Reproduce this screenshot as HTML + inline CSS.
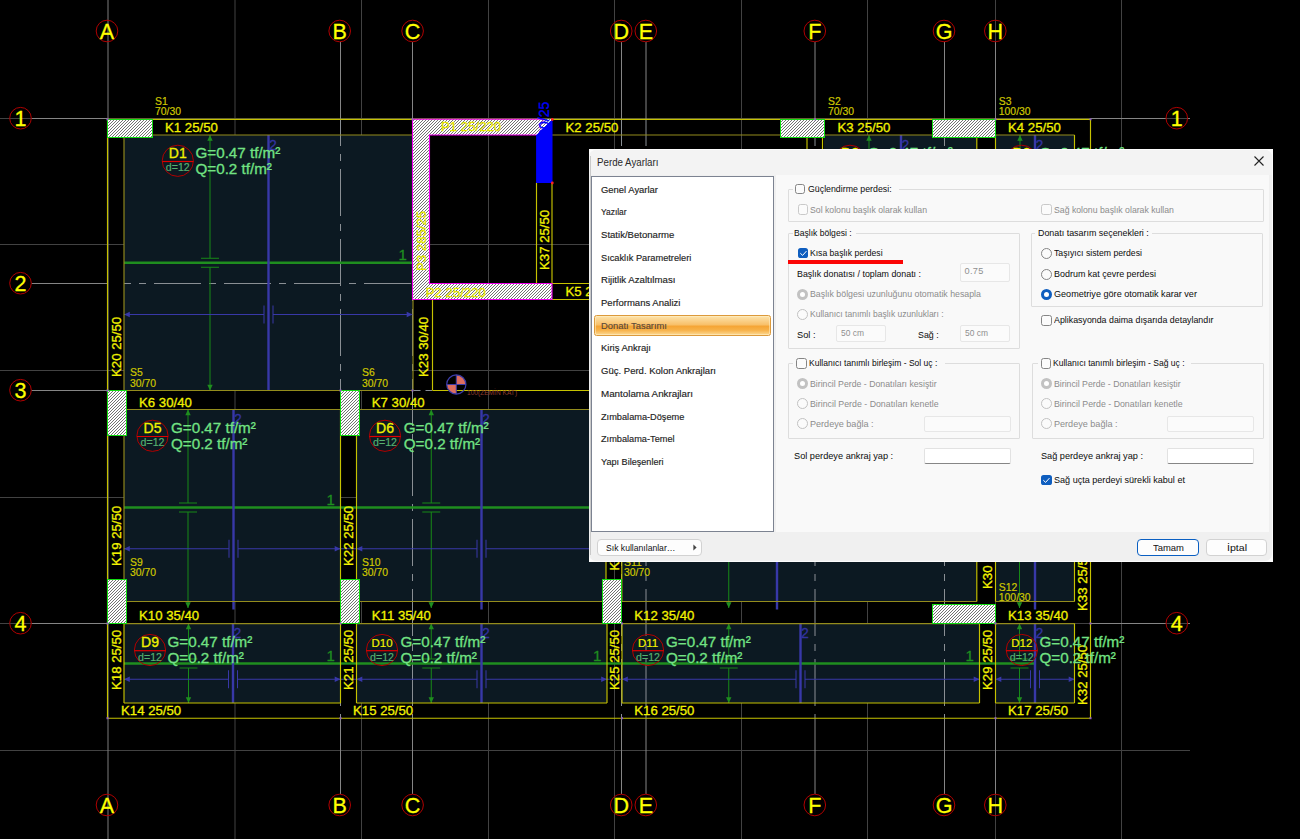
<!DOCTYPE html>
<html lang="tr">
<head>
<meta charset="utf-8">
<title>Perde Ayarları</title>
<style>
html,body{margin:0;padding:0;background:#000;}
body{width:1300px;height:839px;overflow:hidden;position:relative;font-family:"Liberation Sans",sans-serif;}
svg.cad{position:absolute;left:0;top:0;}
svg.cad text{font-family:"Liberation Sans",sans-serif;}
.dlgwrap{position:absolute;left:0;top:0;width:1300px;height:839px;}
.b{position:absolute;display:block;}
.t{position:absolute;display:block;white-space:nowrap;line-height:1;transform-origin:0 50%;font-family:"Liberation Sans",sans-serif;}
</style>
</head>
<body>
<svg class="cad" width="1300" height="839" viewBox="0 0 1300 839">
<defs>
<pattern id="hatch" width="3" height="3" patternUnits="userSpaceOnUse">
<rect width="3" height="3" fill="#ffffff"/>
<path d="M-1 1L1 -1M0 3L3 0M2 4L4 2" stroke="#1a1a1a" stroke-width="0.62"/>
</pattern>
</defs>
<rect width="1300" height="839" fill="#000"/>
<line x1="235" y1="0" x2="235" y2="839" stroke="#424242" stroke-width="1" />
<line x1="361.5" y1="0" x2="361.5" y2="839" stroke="#424242" stroke-width="1" />
<line x1="488.5" y1="0" x2="488.5" y2="839" stroke="#424242" stroke-width="1" />
<line x1="614.5" y1="0" x2="614.5" y2="839" stroke="#424242" stroke-width="1" />
<line x1="741.5" y1="0" x2="741.5" y2="839" stroke="#424242" stroke-width="1" />
<line x1="867.5" y1="0" x2="867.5" y2="839" stroke="#424242" stroke-width="1" />
<line x1="995.5" y1="0" x2="995.5" y2="839" stroke="#424242" stroke-width="1" />
<line x1="1121.5" y1="0" x2="1121.5" y2="839" stroke="#424242" stroke-width="1" />
<line x1="0" y1="118.5" x2="1190" y2="118.5" stroke="#424242" stroke-width="1" />
<line x1="0" y1="244.5" x2="1190" y2="244.5" stroke="#424242" stroke-width="1" />
<line x1="0" y1="370.5" x2="1190" y2="370.5" stroke="#424242" stroke-width="1" />
<line x1="0" y1="497.5" x2="1190" y2="497.5" stroke="#424242" stroke-width="1" />
<line x1="0" y1="623.5" x2="1190" y2="623.5" stroke="#424242" stroke-width="1" />
<line x1="0" y1="750.5" x2="1190" y2="750.5" stroke="#424242" stroke-width="1" />
<line x1="108" y1="0" x2="108" y2="839" stroke="#7c7c7c" stroke-width="1" />
<line x1="340.5" y1="42" x2="340.5" y2="119" stroke="#858585" stroke-width="1" />
<line x1="340.5" y1="718" x2="340.5" y2="794" stroke="#858585" stroke-width="1" />
<line x1="412.5" y1="42" x2="412.5" y2="119" stroke="#858585" stroke-width="1" />
<line x1="412.5" y1="718" x2="412.5" y2="794" stroke="#858585" stroke-width="1" />
<line x1="621.5" y1="42" x2="621.5" y2="119" stroke="#858585" stroke-width="1" />
<line x1="621.5" y1="718" x2="621.5" y2="794" stroke="#858585" stroke-width="1" />
<line x1="646" y1="42" x2="646" y2="119" stroke="#858585" stroke-width="1" />
<line x1="646" y1="718" x2="646" y2="794" stroke="#858585" stroke-width="1" />
<line x1="815" y1="42" x2="815" y2="119" stroke="#858585" stroke-width="1" />
<line x1="815" y1="718" x2="815" y2="794" stroke="#858585" stroke-width="1" />
<line x1="944.5" y1="42" x2="944.5" y2="119" stroke="#858585" stroke-width="1" />
<line x1="944.5" y1="718" x2="944.5" y2="794" stroke="#858585" stroke-width="1" />
<line x1="995.5" y1="42" x2="995.5" y2="119" stroke="#858585" stroke-width="1" />
<line x1="995.5" y1="718" x2="995.5" y2="794" stroke="#858585" stroke-width="1" />
<line x1="31.5" y1="118.5" x2="107.5" y2="118.5" stroke="#858585" stroke-width="1" />
<line x1="1090.5" y1="118.5" x2="1166" y2="118.5" stroke="#858585" stroke-width="1" />
<line x1="1187.5" y1="118.5" x2="1190" y2="118.5" stroke="#858585" stroke-width="1" />
<line x1="31.5" y1="283.5" x2="107.5" y2="283.5" stroke="#858585" stroke-width="1" />
<line x1="1090.5" y1="283.5" x2="1166" y2="283.5" stroke="#858585" stroke-width="1" />
<line x1="1187.5" y1="283.5" x2="1190" y2="283.5" stroke="#858585" stroke-width="1" />
<line x1="31.5" y1="390.5" x2="107.5" y2="390.5" stroke="#858585" stroke-width="1" />
<line x1="1090.5" y1="390.5" x2="1166" y2="390.5" stroke="#858585" stroke-width="1" />
<line x1="1187.5" y1="390.5" x2="1190" y2="390.5" stroke="#858585" stroke-width="1" />
<line x1="31.5" y1="623.5" x2="107.5" y2="623.5" stroke="#858585" stroke-width="1" />
<line x1="1090.5" y1="623.5" x2="1166" y2="623.5" stroke="#858585" stroke-width="1" />
<line x1="1187.5" y1="623.5" x2="1190" y2="623.5" stroke="#858585" stroke-width="1" />
<rect x="124" y="135" width="288.5" height="255.5" fill="#0c1922" stroke="none" stroke-width="1" />
<rect x="824" y="135" width="152.8" height="255.5" fill="#0c1922" stroke="none" stroke-width="1" />
<rect x="996" y="135" width="78.5" height="255.5" fill="#0c1922" stroke="none" stroke-width="1" />
<rect x="124" y="409.5" width="216.5" height="192.0" fill="#0c1922" stroke="none" stroke-width="1" />
<rect x="356.5" y="409.5" width="249.5" height="192.0" fill="#0c1922" stroke="none" stroke-width="1" />
<rect x="622" y="409.5" width="354.8" height="192.0" fill="#0c1922" stroke="none" stroke-width="1" />
<rect x="995.5" y="409.5" width="79.0" height="192.0" fill="#0c1922" stroke="none" stroke-width="1" />
<rect x="124" y="623.5" width="216.5" height="79.5" fill="#0c1922" stroke="none" stroke-width="1" />
<rect x="356.5" y="623.5" width="250.5" height="79.5" fill="#0c1922" stroke="none" stroke-width="1" />
<rect x="622" y="623.5" width="357.5" height="79.5" fill="#0c1922" stroke="none" stroke-width="1" />
<rect x="995.5" y="623.5" width="79.0" height="79.5" fill="#0c1922" stroke="none" stroke-width="1" />
<line x1="340.5" y1="119" x2="340.5" y2="718" stroke="#8a8f94" stroke-width="1" stroke-dasharray="47 8 7 8" stroke-dashoffset="20"/>
<line x1="412.5" y1="119" x2="412.5" y2="718" stroke="#8a8f94" stroke-width="1" stroke-dasharray="47 8 7 8" stroke-dashoffset="20"/>
<line x1="621.5" y1="119" x2="621.5" y2="718" stroke="#8a8f94" stroke-width="1" stroke-dasharray="47 8 7 8" stroke-dashoffset="20"/>
<line x1="646" y1="119" x2="646" y2="718" stroke="#8a8f94" stroke-width="1" stroke-dasharray="47 8 7 8" stroke-dashoffset="20"/>
<line x1="815" y1="119" x2="815" y2="718" stroke="#8a8f94" stroke-width="1" stroke-dasharray="47 8 7 8" stroke-dashoffset="20"/>
<line x1="944.5" y1="119" x2="944.5" y2="718" stroke="#8a8f94" stroke-width="1" stroke-dasharray="47 8 7 8" stroke-dashoffset="20"/>
<line x1="124" y1="283.5" x2="1090" y2="283.5" stroke="#8a8f94" stroke-width="1" stroke-dasharray="47 8 7 8" stroke-dashoffset="40"/>
<line x1="124" y1="262.75" x2="412.5" y2="262.75" stroke="#1f8e1f" stroke-width="2.4" />
<line x1="210" y1="135" x2="210" y2="258.25" stroke="#178a17" stroke-width="1" />
<line x1="210" y1="267.25" x2="210" y2="390.5" stroke="#178a17" stroke-width="1" />
<path d="M207.3 384.7L212.7 384.7L210 390.5Z" fill="#1f8e1f"/>
<path d="M207.3 140.8L212.7 140.8L210 135Z" fill="#1f8e1f"/>
<line x1="201" y1="258.25" x2="219" y2="258.25" stroke="#178a17" stroke-width="1" />
<line x1="201" y1="267.25" x2="219" y2="267.25" stroke="#178a17" stroke-width="1" />
<line x1="268.5" y1="135" x2="268.5" y2="390.5" stroke="#3838a8" stroke-width="2.4" />
<line x1="124" y1="314.5" x2="264.0" y2="314.5" stroke="#3838a8" stroke-width="1" />
<line x1="273.0" y1="314.5" x2="412.5" y2="314.5" stroke="#3838a8" stroke-width="1" />
<path d="M129.8 311.8L129.8 317.2L124 314.5Z" fill="#3838a8"/>
<path d="M406.7 311.8L406.7 317.2L412.5 314.5Z" fill="#3838a8"/>
<line x1="264.0" y1="305.5" x2="264.0" y2="323.5" stroke="#3838a8" stroke-width="1" />
<line x1="273.0" y1="305.5" x2="273.0" y2="323.5" stroke="#3838a8" stroke-width="1" />
<text x="398.5" y="260.15" font-size="15" fill="#1f8e1f" stroke="#1f8e1f" stroke-width="0.3" >1</text>
<text x="268.9" y="149.8" font-size="14" fill="#3232a0" stroke="#3232a0" stroke-width="0.3" >2</text>
<line x1="824" y1="262.75" x2="976.8" y2="262.75" stroke="#1f8e1f" stroke-width="2.4" />
<line x1="869" y1="135" x2="869" y2="258.25" stroke="#178a17" stroke-width="1" />
<line x1="869" y1="267.25" x2="869" y2="390.5" stroke="#178a17" stroke-width="1" />
<path d="M866.3 384.7L871.7 384.7L869 390.5Z" fill="#1f8e1f"/>
<path d="M866.3 140.8L871.7 140.8L869 135Z" fill="#1f8e1f"/>
<line x1="860" y1="258.25" x2="878" y2="258.25" stroke="#178a17" stroke-width="1" />
<line x1="860" y1="267.25" x2="878" y2="267.25" stroke="#178a17" stroke-width="1" />
<line x1="901" y1="135" x2="901" y2="390.5" stroke="#3838a8" stroke-width="2.4" />
<line x1="824" y1="314.5" x2="896.5" y2="314.5" stroke="#3838a8" stroke-width="1" />
<line x1="905.5" y1="314.5" x2="976.8" y2="314.5" stroke="#3838a8" stroke-width="1" />
<path d="M829.8 311.8L829.8 317.2L824 314.5Z" fill="#3838a8"/>
<path d="M971.0 311.8L971.0 317.2L976.8 314.5Z" fill="#3838a8"/>
<line x1="896.5" y1="305.5" x2="896.5" y2="323.5" stroke="#3838a8" stroke-width="1" />
<line x1="905.5" y1="305.5" x2="905.5" y2="323.5" stroke="#3838a8" stroke-width="1" />
<text x="962.8" y="260.15" font-size="15" fill="#1f8e1f" stroke="#1f8e1f" stroke-width="0.3" >1</text>
<text x="901.4" y="149.8" font-size="14" fill="#3232a0" stroke="#3232a0" stroke-width="0.3" >2</text>
<line x1="996" y1="262.75" x2="1074.5" y2="262.75" stroke="#1f8e1f" stroke-width="2.4" />
<line x1="1020" y1="135" x2="1020" y2="258.25" stroke="#178a17" stroke-width="1" />
<line x1="1020" y1="267.25" x2="1020" y2="390.5" stroke="#178a17" stroke-width="1" />
<path d="M1017.3 384.7L1022.7 384.7L1020 390.5Z" fill="#1f8e1f"/>
<path d="M1017.3 140.8L1022.7 140.8L1020 135Z" fill="#1f8e1f"/>
<line x1="1011" y1="258.25" x2="1029" y2="258.25" stroke="#178a17" stroke-width="1" />
<line x1="1011" y1="267.25" x2="1029" y2="267.25" stroke="#178a17" stroke-width="1" />
<line x1="1035" y1="135" x2="1035" y2="390.5" stroke="#3838a8" stroke-width="2.4" />
<line x1="996" y1="314.5" x2="1030.5" y2="314.5" stroke="#3838a8" stroke-width="1" />
<line x1="1039.5" y1="314.5" x2="1074.5" y2="314.5" stroke="#3838a8" stroke-width="1" />
<path d="M1001.8 311.8L1001.8 317.2L996 314.5Z" fill="#3838a8"/>
<path d="M1068.7 311.8L1068.7 317.2L1074.5 314.5Z" fill="#3838a8"/>
<line x1="1030.5" y1="305.5" x2="1030.5" y2="323.5" stroke="#3838a8" stroke-width="1" />
<line x1="1039.5" y1="305.5" x2="1039.5" y2="323.5" stroke="#3838a8" stroke-width="1" />
<text x="1060.5" y="260.15" font-size="15" fill="#1f8e1f" stroke="#1f8e1f" stroke-width="0.3" >1</text>
<text x="1035.4" y="149.8" font-size="14" fill="#3232a0" stroke="#3232a0" stroke-width="0.3" >2</text>
<line x1="124" y1="507.5" x2="340.5" y2="507.5" stroke="#1f8e1f" stroke-width="2.4" />
<line x1="188" y1="409.5" x2="188" y2="503.0" stroke="#178a17" stroke-width="1" />
<line x1="188" y1="512.0" x2="188" y2="608.0" stroke="#178a17" stroke-width="1" />
<path d="M185.3 602.2L190.7 602.2L188 608.0Z" fill="#1f8e1f"/>
<path d="M185.3 415.3L190.7 415.3L188 409.5Z" fill="#1f8e1f"/>
<line x1="179" y1="503.0" x2="197" y2="503.0" stroke="#178a17" stroke-width="1" />
<line x1="179" y1="512.0" x2="197" y2="512.0" stroke="#178a17" stroke-width="1" />
<line x1="233.5" y1="409.5" x2="233.5" y2="609.5" stroke="#3838a8" stroke-width="2.4" />
<line x1="124" y1="548.75" x2="229.0" y2="548.75" stroke="#3838a8" stroke-width="1" />
<line x1="238.0" y1="548.75" x2="340.5" y2="548.75" stroke="#3838a8" stroke-width="1" />
<path d="M129.8 546.05L129.8 551.45L124 548.75Z" fill="#3838a8"/>
<path d="M334.7 546.05L334.7 551.45L340.5 548.75Z" fill="#3838a8"/>
<line x1="229.0" y1="539.75" x2="229.0" y2="557.75" stroke="#3838a8" stroke-width="1" />
<line x1="238.0" y1="539.75" x2="238.0" y2="557.75" stroke="#3838a8" stroke-width="1" />
<text x="326.5" y="504.9" font-size="15" fill="#1f8e1f" stroke="#1f8e1f" stroke-width="0.3" >1</text>
<text x="233.9" y="424.3" font-size="14" fill="#3232a0" stroke="#3232a0" stroke-width="0.3" >2</text>
<line x1="356.5" y1="507.5" x2="606" y2="507.5" stroke="#1f8e1f" stroke-width="2.4" />
<line x1="431.25" y1="409.5" x2="431.25" y2="503.0" stroke="#178a17" stroke-width="1" />
<line x1="431.25" y1="512.0" x2="431.25" y2="608.0" stroke="#178a17" stroke-width="1" />
<path d="M428.55 602.2L433.95 602.2L431.25 608.0Z" fill="#1f8e1f"/>
<path d="M428.55 415.3L433.95 415.3L431.25 409.5Z" fill="#1f8e1f"/>
<line x1="422.25" y1="503.0" x2="440.25" y2="503.0" stroke="#178a17" stroke-width="1" />
<line x1="422.25" y1="512.0" x2="440.25" y2="512.0" stroke="#178a17" stroke-width="1" />
<line x1="481.5" y1="409.5" x2="481.5" y2="609.5" stroke="#3838a8" stroke-width="2.4" />
<line x1="356.5" y1="548.75" x2="477.0" y2="548.75" stroke="#3838a8" stroke-width="1" />
<line x1="486.0" y1="548.75" x2="606" y2="548.75" stroke="#3838a8" stroke-width="1" />
<path d="M362.3 546.05L362.3 551.45L356.5 548.75Z" fill="#3838a8"/>
<path d="M600.2 546.05L600.2 551.45L606 548.75Z" fill="#3838a8"/>
<line x1="477.0" y1="539.75" x2="477.0" y2="557.75" stroke="#3838a8" stroke-width="1" />
<line x1="486.0" y1="539.75" x2="486.0" y2="557.75" stroke="#3838a8" stroke-width="1" />
<text x="592" y="504.9" font-size="15" fill="#1f8e1f" stroke="#1f8e1f" stroke-width="0.3" >1</text>
<text x="481.9" y="424.3" font-size="14" fill="#3232a0" stroke="#3232a0" stroke-width="0.3" >2</text>
<line x1="622" y1="507.5" x2="976.8" y2="507.5" stroke="#1f8e1f" stroke-width="2.4" />
<line x1="728.75" y1="409.5" x2="728.75" y2="503.0" stroke="#178a17" stroke-width="1" />
<line x1="728.75" y1="512.0" x2="728.75" y2="608.0" stroke="#178a17" stroke-width="1" />
<path d="M726.05 602.2L731.45 602.2L728.75 608.0Z" fill="#1f8e1f"/>
<path d="M726.05 415.3L731.45 415.3L728.75 409.5Z" fill="#1f8e1f"/>
<line x1="719.75" y1="503.0" x2="737.75" y2="503.0" stroke="#178a17" stroke-width="1" />
<line x1="719.75" y1="512.0" x2="737.75" y2="512.0" stroke="#178a17" stroke-width="1" />
<line x1="777" y1="409.5" x2="777" y2="609.5" stroke="#3838a8" stroke-width="2.4" />
<line x1="622" y1="548.75" x2="772.5" y2="548.75" stroke="#3838a8" stroke-width="1" />
<line x1="781.5" y1="548.75" x2="976.8" y2="548.75" stroke="#3838a8" stroke-width="1" />
<path d="M627.8 546.05L627.8 551.45L622 548.75Z" fill="#3838a8"/>
<path d="M971.0 546.05L971.0 551.45L976.8 548.75Z" fill="#3838a8"/>
<line x1="772.5" y1="539.75" x2="772.5" y2="557.75" stroke="#3838a8" stroke-width="1" />
<line x1="781.5" y1="539.75" x2="781.5" y2="557.75" stroke="#3838a8" stroke-width="1" />
<text x="962.8" y="504.9" font-size="15" fill="#1f8e1f" stroke="#1f8e1f" stroke-width="0.3" >1</text>
<text x="777.4" y="424.3" font-size="14" fill="#3232a0" stroke="#3232a0" stroke-width="0.3" >2</text>
<line x1="995.5" y1="507.5" x2="1074.5" y2="507.5" stroke="#1f8e1f" stroke-width="2.4" />
<line x1="1019.5" y1="409.5" x2="1019.5" y2="503.0" stroke="#178a17" stroke-width="1" />
<line x1="1019.5" y1="512.0" x2="1019.5" y2="608.0" stroke="#178a17" stroke-width="1" />
<path d="M1016.8 602.2L1022.2 602.2L1019.5 608.0Z" fill="#1f8e1f"/>
<path d="M1016.8 415.3L1022.2 415.3L1019.5 409.5Z" fill="#1f8e1f"/>
<line x1="1010.5" y1="503.0" x2="1028.5" y2="503.0" stroke="#178a17" stroke-width="1" />
<line x1="1010.5" y1="512.0" x2="1028.5" y2="512.0" stroke="#178a17" stroke-width="1" />
<line x1="1035" y1="409.5" x2="1035" y2="609.5" stroke="#3838a8" stroke-width="2.4" />
<line x1="995.5" y1="548.75" x2="1030.5" y2="548.75" stroke="#3838a8" stroke-width="1" />
<line x1="1039.5" y1="548.75" x2="1074.5" y2="548.75" stroke="#3838a8" stroke-width="1" />
<path d="M1001.3 546.05L1001.3 551.45L995.5 548.75Z" fill="#3838a8"/>
<path d="M1068.7 546.05L1068.7 551.45L1074.5 548.75Z" fill="#3838a8"/>
<line x1="1030.5" y1="539.75" x2="1030.5" y2="557.75" stroke="#3838a8" stroke-width="1" />
<line x1="1039.5" y1="539.75" x2="1039.5" y2="557.75" stroke="#3838a8" stroke-width="1" />
<text x="1060.5" y="504.9" font-size="15" fill="#1f8e1f" stroke="#1f8e1f" stroke-width="0.3" >1</text>
<text x="1035.4" y="424.3" font-size="14" fill="#3232a0" stroke="#3232a0" stroke-width="0.3" >2</text>
<line x1="124" y1="663.5" x2="340.5" y2="663.5" stroke="#1f8e1f" stroke-width="2.4" />
<line x1="188.5" y1="623.5" x2="188.5" y2="659.0" stroke="#178a17" stroke-width="1" />
<line x1="188.5" y1="668.0" x2="188.5" y2="703" stroke="#178a17" stroke-width="1" />
<path d="M185.8 697.2L191.2 697.2L188.5 703Z" fill="#1f8e1f"/>
<path d="M185.8 629.3L191.2 629.3L188.5 623.5Z" fill="#1f8e1f"/>
<line x1="179.5" y1="659.0" x2="197.5" y2="659.0" stroke="#178a17" stroke-width="1" />
<line x1="179.5" y1="668.0" x2="197.5" y2="668.0" stroke="#178a17" stroke-width="1" />
<line x1="233" y1="623.5" x2="233" y2="703" stroke="#3838a8" stroke-width="2.4" />
<line x1="124" y1="679.25" x2="228.5" y2="679.25" stroke="#3838a8" stroke-width="1" />
<line x1="237.5" y1="679.25" x2="340.5" y2="679.25" stroke="#3838a8" stroke-width="1" />
<path d="M129.8 676.55L129.8 681.95L124 679.25Z" fill="#3838a8"/>
<path d="M334.7 676.55L334.7 681.95L340.5 679.25Z" fill="#3838a8"/>
<line x1="228.5" y1="670.25" x2="228.5" y2="688.25" stroke="#3838a8" stroke-width="1" />
<line x1="237.5" y1="670.25" x2="237.5" y2="688.25" stroke="#3838a8" stroke-width="1" />
<text x="326.5" y="660.9" font-size="15" fill="#1f8e1f" stroke="#1f8e1f" stroke-width="0.3" >1</text>
<text x="233.4" y="638.3" font-size="14" fill="#3232a0" stroke="#3232a0" stroke-width="0.3" >2</text>
<line x1="356.5" y1="663.5" x2="607" y2="663.5" stroke="#1f8e1f" stroke-width="2.4" />
<line x1="431.25" y1="623.5" x2="431.25" y2="659.0" stroke="#178a17" stroke-width="1" />
<line x1="431.25" y1="668.0" x2="431.25" y2="703" stroke="#178a17" stroke-width="1" />
<path d="M428.55 697.2L433.95 697.2L431.25 703Z" fill="#1f8e1f"/>
<path d="M428.55 629.3L433.95 629.3L431.25 623.5Z" fill="#1f8e1f"/>
<line x1="422.25" y1="659.0" x2="440.25" y2="659.0" stroke="#178a17" stroke-width="1" />
<line x1="422.25" y1="668.0" x2="440.25" y2="668.0" stroke="#178a17" stroke-width="1" />
<line x1="481.5" y1="623.5" x2="481.5" y2="703" stroke="#3838a8" stroke-width="2.4" />
<line x1="356.5" y1="679.25" x2="477.0" y2="679.25" stroke="#3838a8" stroke-width="1" />
<line x1="486.0" y1="679.25" x2="607" y2="679.25" stroke="#3838a8" stroke-width="1" />
<path d="M362.3 676.55L362.3 681.95L356.5 679.25Z" fill="#3838a8"/>
<path d="M601.2 676.55L601.2 681.95L607 679.25Z" fill="#3838a8"/>
<line x1="477.0" y1="670.25" x2="477.0" y2="688.25" stroke="#3838a8" stroke-width="1" />
<line x1="486.0" y1="670.25" x2="486.0" y2="688.25" stroke="#3838a8" stroke-width="1" />
<text x="593" y="660.9" font-size="15" fill="#1f8e1f" stroke="#1f8e1f" stroke-width="0.3" >1</text>
<text x="481.9" y="638.3" font-size="14" fill="#3232a0" stroke="#3232a0" stroke-width="0.3" >2</text>
<line x1="622" y1="663.5" x2="979.5" y2="663.5" stroke="#1f8e1f" stroke-width="2.4" />
<line x1="728.75" y1="623.5" x2="728.75" y2="659.0" stroke="#178a17" stroke-width="1" />
<line x1="728.75" y1="668.0" x2="728.75" y2="703" stroke="#178a17" stroke-width="1" />
<path d="M726.05 697.2L731.45 697.2L728.75 703Z" fill="#1f8e1f"/>
<path d="M726.05 629.3L731.45 629.3L728.75 623.5Z" fill="#1f8e1f"/>
<line x1="719.75" y1="659.0" x2="737.75" y2="659.0" stroke="#178a17" stroke-width="1" />
<line x1="719.75" y1="668.0" x2="737.75" y2="668.0" stroke="#178a17" stroke-width="1" />
<line x1="800.5" y1="623.5" x2="800.5" y2="703" stroke="#3838a8" stroke-width="2.4" />
<line x1="622" y1="679.25" x2="796.0" y2="679.25" stroke="#3838a8" stroke-width="1" />
<line x1="805.0" y1="679.25" x2="979.5" y2="679.25" stroke="#3838a8" stroke-width="1" />
<path d="M627.8 676.55L627.8 681.95L622 679.25Z" fill="#3838a8"/>
<path d="M973.7 676.55L973.7 681.95L979.5 679.25Z" fill="#3838a8"/>
<line x1="796.0" y1="670.25" x2="796.0" y2="688.25" stroke="#3838a8" stroke-width="1" />
<line x1="805.0" y1="670.25" x2="805.0" y2="688.25" stroke="#3838a8" stroke-width="1" />
<text x="965.5" y="660.9" font-size="15" fill="#1f8e1f" stroke="#1f8e1f" stroke-width="0.3" >1</text>
<text x="800.9" y="638.3" font-size="14" fill="#3232a0" stroke="#3232a0" stroke-width="0.3" >2</text>
<line x1="995.5" y1="663.5" x2="1035" y2="663.5" stroke="#1f8e1f" stroke-width="2.4" />
<line x1="1019.5" y1="623.5" x2="1019.5" y2="659.0" stroke="#178a17" stroke-width="1" />
<line x1="1019.5" y1="668.0" x2="1019.5" y2="703" stroke="#178a17" stroke-width="1" />
<path d="M1016.8 697.2L1022.2 697.2L1019.5 703Z" fill="#1f8e1f"/>
<path d="M1016.8 629.3L1022.2 629.3L1019.5 623.5Z" fill="#1f8e1f"/>
<line x1="1010.5" y1="659.0" x2="1028.5" y2="659.0" stroke="#178a17" stroke-width="1" />
<line x1="1010.5" y1="668.0" x2="1028.5" y2="668.0" stroke="#178a17" stroke-width="1" />
<line x1="1035" y1="623.5" x2="1035" y2="703" stroke="#3838a8" stroke-width="2.4" />
<line x1="995.5" y1="679.25" x2="1030.5" y2="679.25" stroke="#3838a8" stroke-width="1" />
<line x1="1039.5" y1="679.25" x2="1074.5" y2="679.25" stroke="#3838a8" stroke-width="1" />
<path d="M1001.3 676.55L1001.3 681.95L995.5 679.25Z" fill="#3838a8"/>
<path d="M1068.7 676.55L1068.7 681.95L1074.5 679.25Z" fill="#3838a8"/>
<line x1="1030.5" y1="670.25" x2="1030.5" y2="688.25" stroke="#3838a8" stroke-width="1" />
<line x1="1039.5" y1="670.25" x2="1039.5" y2="688.25" stroke="#3838a8" stroke-width="1" />
<text x="1035.4" y="638.3" font-size="14" fill="#3232a0" stroke="#3232a0" stroke-width="0.3" >2</text>
<line x1="340.5" y1="507.5" x2="356.5" y2="507.5" stroke="#1f8e1f" stroke-width="2.4" />
<line x1="340.5" y1="663.5" x2="356.5" y2="663.5" stroke="#1f8e1f" stroke-width="2.4" />
<line x1="607" y1="663.5" x2="622" y2="663.5" stroke="#1f8e1f" stroke-width="2.4" />
<line x1="979.5" y1="663.5" x2="995.5" y2="663.5" stroke="#1f8e1f" stroke-width="2.4" />
<line x1="340.5" y1="548.75" x2="356.5" y2="548.75" stroke="#3838a8" stroke-width="1" />
<line x1="340.5" y1="679.25" x2="356.5" y2="679.25" stroke="#3838a8" stroke-width="1" />
<line x1="607" y1="679.25" x2="622" y2="679.25" stroke="#3838a8" stroke-width="1" />
<line x1="107.5" y1="119.3" x2="1090.5" y2="119.3" stroke="#c6c200" stroke-width="1.15" />
<line x1="107.5" y1="718.2" x2="1090.5" y2="718.2" stroke="#c6c200" stroke-width="1.15" />
<line x1="107.5" y1="119" x2="107.5" y2="718" stroke="#c6c200" stroke-width="1.15" />
<line x1="1090.5" y1="119" x2="1090.5" y2="718" stroke="#c6c200" stroke-width="1.15" />
<line x1="124" y1="135" x2="412.5" y2="135" stroke="#948c1c" stroke-width="1.15" />
<line x1="552" y1="135" x2="807" y2="135" stroke="#948c1c" stroke-width="1.15" />
<line x1="824" y1="135" x2="976.8" y2="135" stroke="#948c1c" stroke-width="1.15" />
<line x1="996" y1="135" x2="1074.5" y2="135" stroke="#948c1c" stroke-width="1.15" />
<line x1="552" y1="283.5" x2="700" y2="283.5" stroke="#c6c200" stroke-width="1.15" />
<line x1="552" y1="299.5" x2="700" y2="299.5" stroke="#c6c200" stroke-width="1.15" />
<line x1="107.5" y1="390.5" x2="412.5" y2="390.5" stroke="#948c1c" stroke-width="1.15" />
<line x1="432.5" y1="390.5" x2="700" y2="390.5" stroke="#c6c200" stroke-width="1.15" />
<line x1="124" y1="409.5" x2="340.5" y2="409.5" stroke="#948c1c" stroke-width="1.15" />
<line x1="124" y1="601.5" x2="340.5" y2="601.5" stroke="#948c1c" stroke-width="1.15" />
<line x1="356.5" y1="409.5" x2="606" y2="409.5" stroke="#948c1c" stroke-width="1.15" />
<line x1="356.5" y1="601.5" x2="606" y2="601.5" stroke="#948c1c" stroke-width="1.15" />
<line x1="622" y1="409.5" x2="976.8" y2="409.5" stroke="#948c1c" stroke-width="1.15" />
<line x1="622" y1="601.5" x2="976.8" y2="601.5" stroke="#948c1c" stroke-width="1.15" />
<line x1="995.5" y1="409.5" x2="1074.5" y2="409.5" stroke="#948c1c" stroke-width="1.15" />
<line x1="995.5" y1="601.5" x2="1074.5" y2="601.5" stroke="#948c1c" stroke-width="1.15" />
<line x1="124" y1="623.6" x2="340.5" y2="623.6" stroke="#948c1c" stroke-width="1.15" />
<line x1="124" y1="703" x2="340.5" y2="703" stroke="#c6c200" stroke-width="1.15" />
<line x1="356.5" y1="623.6" x2="607" y2="623.6" stroke="#948c1c" stroke-width="1.15" />
<line x1="356.5" y1="703" x2="607" y2="703" stroke="#c6c200" stroke-width="1.15" />
<line x1="622" y1="623.6" x2="979.5" y2="623.6" stroke="#948c1c" stroke-width="1.15" />
<line x1="622" y1="703" x2="979.5" y2="703" stroke="#c6c200" stroke-width="1.15" />
<line x1="995.5" y1="623.6" x2="1074.5" y2="623.6" stroke="#948c1c" stroke-width="1.15" />
<line x1="995.5" y1="703" x2="1074.5" y2="703" stroke="#c6c200" stroke-width="1.15" />
<line x1="124" y1="135" x2="124" y2="390.5" stroke="#948c1c" stroke-width="1.15" />
<line x1="124" y1="409.5" x2="124" y2="601.5" stroke="#948c1c" stroke-width="1.15" />
<line x1="124" y1="623.5" x2="124" y2="703" stroke="#c6c200" stroke-width="1.15" />
<line x1="340.5" y1="409.5" x2="340.5" y2="601.5" stroke="#c6c200" stroke-width="1.15" />
<line x1="356.5" y1="409.5" x2="356.5" y2="601.5" stroke="#c6c200" stroke-width="1.15" />
<line x1="340.5" y1="623.5" x2="340.5" y2="703" stroke="#c6c200" stroke-width="1.15" />
<line x1="356.5" y1="623.5" x2="356.5" y2="703" stroke="#c6c200" stroke-width="1.15" />
<line x1="413" y1="299.5" x2="413" y2="390.5" stroke="#948c1c" stroke-width="1.15" />
<line x1="432.5" y1="299.5" x2="432.5" y2="390.5" stroke="#c6c200" stroke-width="1.15" />
<line x1="536.5" y1="183" x2="536.5" y2="283.5" stroke="#c6c200" stroke-width="1.15" />
<line x1="552" y1="183" x2="552" y2="283.5" stroke="#c6c200" stroke-width="1.15" />
<line x1="606" y1="409.5" x2="606" y2="601.5" stroke="#c6c200" stroke-width="1.15" />
<line x1="621.8" y1="409.5" x2="621.8" y2="601.5" stroke="#c6c200" stroke-width="1.15" />
<line x1="607" y1="623.5" x2="607" y2="703" stroke="#c6c200" stroke-width="1.15" />
<line x1="622" y1="623.5" x2="622" y2="703" stroke="#c6c200" stroke-width="1.15" />
<line x1="807" y1="138" x2="807" y2="390.5" stroke="#c6c200" stroke-width="1.15" />
<line x1="822.5" y1="138" x2="822.5" y2="390.5" stroke="#c6c200" stroke-width="1.15" />
<line x1="976.8" y1="135" x2="976.8" y2="601.5" stroke="#c6c200" stroke-width="1.15" />
<line x1="995.5" y1="135" x2="995.5" y2="601.5" stroke="#c6c200" stroke-width="1.15" />
<line x1="979.5" y1="623.5" x2="979.5" y2="703" stroke="#c6c200" stroke-width="1.15" />
<line x1="995.5" y1="623.5" x2="995.5" y2="703" stroke="#c6c200" stroke-width="1.15" />
<line x1="1074.5" y1="135" x2="1074.5" y2="601.5" stroke="#c6c200" stroke-width="1.15" />
<line x1="1074.5" y1="623.5" x2="1074.5" y2="703" stroke="#c6c200" stroke-width="1.15" />
<rect x="107.5" y="119.5" width="45.0" height="18.0" fill="url(#hatch)" stroke="#12dc12" stroke-width="1" />
<rect x="780.5" y="119.5" width="44.0" height="18.0" fill="url(#hatch)" stroke="#12dc12" stroke-width="1" />
<rect x="932.5" y="119.5" width="63.0" height="18.0" fill="url(#hatch)" stroke="#12dc12" stroke-width="1" />
<rect x="107.5" y="390.5" width="19.0" height="45.0" fill="url(#hatch)" stroke="#12dc12" stroke-width="1" />
<rect x="340.5" y="390.5" width="19.0" height="45.0" fill="url(#hatch)" stroke="#12dc12" stroke-width="1" />
<rect x="107.5" y="579.5" width="19.0" height="44.0" fill="url(#hatch)" stroke="#12dc12" stroke-width="1" />
<rect x="340.5" y="579.5" width="19.0" height="44.0" fill="url(#hatch)" stroke="#12dc12" stroke-width="1" />
<rect x="602.5" y="579.5" width="19.0" height="44.0" fill="url(#hatch)" stroke="#12dc12" stroke-width="1" />
<rect x="932.5" y="604.5" width="63.0" height="19.0" fill="url(#hatch)" stroke="#12dc12" stroke-width="1" />
<path d="M412.5 119.3H544L536.3 135H429.5V283.5H552V299.5H412.5Z" fill="url(#hatch)" stroke="#f000f0" stroke-width="1.1"/>
<path d="M552.3 119.3V183H536.3V135Z" fill="#0000fb"/>
<path d="M536.3 135L544 119.3H552.3L540 131Z" fill="url(#hatch)"/>
<path d="M552.3 119.3L536.3 135V183H552.3Z" fill="#0000fb"/>
<path d="M536.3 135L552 119.5L548 119.5L536.3 131Z" fill="url(#hatch)"/>
<circle cx="552.3" cy="119.5" r="1.4" fill="#ff2020"/><circle cx="552.3" cy="183" r="1.4" fill="#ff2020"/>
<rect x="106.5" y="118.3" width="2" height="2" fill="#9060c0"/>
<rect x="411.5" y="118.3" width="2" height="2" fill="#9060c0"/>
<rect x="814" y="118.3" width="2" height="2" fill="#9060c0"/>
<rect x="994.5" y="118.3" width="2" height="2" fill="#9060c0"/>
<rect x="1089.5" y="118.3" width="2" height="2" fill="#9060c0"/>
<rect x="106.5" y="389.5" width="2" height="2" fill="#9060c0"/>
<rect x="106.5" y="622.5" width="2" height="2" fill="#9060c0"/>
<rect x="106.5" y="717.2" width="2" height="2" fill="#9060c0"/>
<rect x="339.5" y="717.2" width="2" height="2" fill="#9060c0"/>
<rect x="621" y="717.2" width="2" height="2" fill="#9060c0"/>
<rect x="994.5" y="717.2" width="2" height="2" fill="#9060c0"/>
<rect x="1089.5" y="717.2" width="2" height="2" fill="#9060c0"/>
<rect x="1089.5" y="622.5" width="2" height="2" fill="#9060c0"/>
<rect x="994.5" y="622.5" width="2" height="2" fill="#9060c0"/>
<rect x="339.5" y="389.5" width="2" height="2" fill="#9060c0"/>
<rect x="411.5" y="389.5" width="2" height="2" fill="#9060c0"/>
<rect x="339.5" y="622.5" width="2" height="2" fill="#9060c0"/>
<rect x="621" y="622.5" width="2" height="2" fill="#9060c0"/>
<line x1="413.5" y1="390.5" x2="432" y2="390.5" stroke="#8a8f94" stroke-width="1" stroke-dasharray="7 5"/>
<path d="M456.3 384.5V374.9A9.6 9.6 0 0 1 465.90000000000003 384.5Z" fill="#dd6e60"/>
<path d="M456.3 384.5V394.1A9.6 9.6 0 0 1 446.7 384.5Z" fill="#dd6e60"/>
<circle cx="456.3" cy="384.5" r="9.6" fill="none" stroke="#3c3ca8" stroke-width="1.2"/>
<line x1="446.7" y1="384.5" x2="465.90000000000003" y2="384.5" stroke="#3c3ca8" stroke-width="1" />
<line x1="456.3" y1="374.9" x2="456.3" y2="394.1" stroke="#3c3ca8" stroke-width="1" />
<text x="467" y="395.2" font-size="6.6" fill="#8e3c30" stroke="#8e3c30" stroke-width="0" >100(ZEMİN KAT)</text>
<text x="165" y="131.5" font-size="13.2" fill="#f2f200" stroke="#f2f200" stroke-width="0.3" >K1 25/50</text>
<text x="565.5" y="131.5" font-size="13.2" fill="#f2f200" stroke="#f2f200" stroke-width="0.3" >K2 25/50</text>
<text x="837.5" y="131.5" font-size="13.2" fill="#f2f200" stroke="#f2f200" stroke-width="0.3" >K3 25/50</text>
<text x="1008" y="131.5" font-size="13.2" fill="#f2f200" stroke="#f2f200" stroke-width="0.3" >K4 25/50</text>
<text x="565.5" y="296" font-size="13.2" fill="#f2f200" stroke="#f2f200" stroke-width="0.3" >K5 25/50</text>
<text x="139" y="407" font-size="13.2" fill="#f2f200" stroke="#f2f200" stroke-width="0.3" >K6 30/40</text>
<text x="371.8" y="407" font-size="13.2" fill="#f2f200" stroke="#f2f200" stroke-width="0.3" >K7 30/40</text>
<text x="139" y="620" font-size="13.2" fill="#f2f200" stroke="#f2f200" stroke-width="0.3" >K10 35/40</text>
<text x="371.8" y="620" font-size="13.2" fill="#f2f200" stroke="#f2f200" stroke-width="0.3" >K11 35/40</text>
<text x="634.3" y="620" font-size="13.2" fill="#f2f200" stroke="#f2f200" stroke-width="0.3" >K12 35/40</text>
<text x="1008" y="620" font-size="13.2" fill="#f2f200" stroke="#f2f200" stroke-width="0.3" >K13 35/40</text>
<text x="121" y="715" font-size="13.2" fill="#f2f200" stroke="#f2f200" stroke-width="0.3" >K14 25/50</text>
<text x="353" y="715" font-size="13.2" fill="#f2f200" stroke="#f2f200" stroke-width="0.3" >K15 25/50</text>
<text x="634.3" y="715" font-size="13.2" fill="#f2f200" stroke="#f2f200" stroke-width="0.3" >K16 25/50</text>
<text x="1008" y="715" font-size="13.2" fill="#f2f200" stroke="#f2f200" stroke-width="0.3" >K17 25/50</text>
<text transform="translate(116,377) rotate(-90)" font-size="13.2" fill="#f2f200" stroke="#f2f200" stroke-width="0.3" dominant-baseline="central" >K20 25/50</text>
<text transform="translate(544.3,270) rotate(-90)" font-size="13.2" fill="#f2f200" stroke="#f2f200" stroke-width="0.3" dominant-baseline="central" >K37 25/50</text>
<text transform="translate(423,377) rotate(-90)" font-size="13.2" fill="#f2f200" stroke="#f2f200" stroke-width="0.3" dominant-baseline="central" >K23 30/40</text>
<text transform="translate(116,566) rotate(-90)" font-size="13.2" fill="#f2f200" stroke="#f2f200" stroke-width="0.3" dominant-baseline="central" >K19 25/50</text>
<text transform="translate(348.5,566) rotate(-90)" font-size="13.2" fill="#f2f200" stroke="#f2f200" stroke-width="0.3" dominant-baseline="central" >K22 25/50</text>
<text transform="translate(116,690) rotate(-90)" font-size="13.2" fill="#f2f200" stroke="#f2f200" stroke-width="0.3" dominant-baseline="central" >K18 25/50</text>
<text transform="translate(348.5,690) rotate(-90)" font-size="13.2" fill="#f2f200" stroke="#f2f200" stroke-width="0.3" dominant-baseline="central" >K21 25/50</text>
<text transform="translate(614.5,690) rotate(-90)" font-size="13.2" fill="#f2f200" stroke="#f2f200" stroke-width="0.3" dominant-baseline="central" >K25 25/50</text>
<text transform="translate(987.5,690) rotate(-90)" font-size="13.2" fill="#f2f200" stroke="#f2f200" stroke-width="0.3" dominant-baseline="central" >K29 25/50</text>
<text transform="translate(1082.5,705) rotate(-90)" font-size="13.2" fill="#f2f200" stroke="#f2f200" stroke-width="0.3" dominant-baseline="central" >K32 25/50</text>
<text transform="translate(1082.5,611) rotate(-90)" font-size="13.2" fill="#f2f200" stroke="#f2f200" stroke-width="0.3" dominant-baseline="central" >K33 25/50</text>
<text transform="translate(987.5,589) rotate(-90)" font-size="13.2" fill="#f2f200" stroke="#f2f200" stroke-width="0.3" dominant-baseline="central" >K30 30/40</text>
<text transform="translate(614,570.5) rotate(-90)" font-size="13.2" fill="#f2f200" stroke="#f2f200" stroke-width="0.3" dominant-baseline="central" >K24 25/50</text>
<text x="441" y="131" font-size="13.2" fill="#e6e600" stroke="#e6e600" stroke-width="0.3" >P1 25/220</text>
<text x="425.8" y="296.5" font-size="13.2" fill="#e6e600" stroke="#e6e600" stroke-width="0.3" >P2 25/220</text>
<text transform="translate(421,271) rotate(-90)" font-size="13.2" fill="#e6e600" stroke="#e6e600" stroke-width="0.3" dominant-baseline="central" >P3 285/25</text>
<text transform="translate(544,165.5) rotate(-90)" font-size="14" fill="#0000fb" stroke="#0000fb" stroke-width="0.3" dominant-baseline="central" >P4 100/25</text>
<text x="155" y="104.5" font-size="10.4" fill="#cfc800" stroke="#cfc800" stroke-width="0.18" >S1</text>
<text x="155" y="115.1" font-size="10.4" fill="#cfc800" stroke="#cfc800" stroke-width="0.18" >70/30</text>
<text x="828" y="104.5" font-size="10.4" fill="#cfc800" stroke="#cfc800" stroke-width="0.18" >S2</text>
<text x="828" y="115.1" font-size="10.4" fill="#cfc800" stroke="#cfc800" stroke-width="0.18" >70/30</text>
<text x="998.8" y="104.5" font-size="10.4" fill="#cfc800" stroke="#cfc800" stroke-width="0.18" >S3</text>
<text x="998.8" y="115.1" font-size="10.4" fill="#cfc800" stroke="#cfc800" stroke-width="0.18" >100/30</text>
<text x="130" y="376" font-size="10.4" fill="#cfc800" stroke="#cfc800" stroke-width="0.18" >S5</text>
<text x="130" y="386.6" font-size="10.4" fill="#cfc800" stroke="#cfc800" stroke-width="0.18" >30/70</text>
<text x="362" y="376" font-size="10.4" fill="#cfc800" stroke="#cfc800" stroke-width="0.18" >S6</text>
<text x="362" y="386.6" font-size="10.4" fill="#cfc800" stroke="#cfc800" stroke-width="0.18" >30/70</text>
<text x="130" y="565.5" font-size="10.4" fill="#cfc800" stroke="#cfc800" stroke-width="0.18" >S9</text>
<text x="130" y="576.1" font-size="10.4" fill="#cfc800" stroke="#cfc800" stroke-width="0.18" >30/70</text>
<text x="362" y="565.5" font-size="10.4" fill="#cfc800" stroke="#cfc800" stroke-width="0.18" >S10</text>
<text x="362" y="576.1" font-size="10.4" fill="#cfc800" stroke="#cfc800" stroke-width="0.18" >30/70</text>
<text x="624" y="565.5" font-size="10.4" fill="#cfc800" stroke="#cfc800" stroke-width="0.18" >S11</text>
<text x="624" y="576.1" font-size="10.4" fill="#cfc800" stroke="#cfc800" stroke-width="0.18" >30/70</text>
<text x="998.8" y="590.5" font-size="10.4" fill="#cfc800" stroke="#cfc800" stroke-width="0.18" >S12</text>
<text x="998.8" y="601.1" font-size="10.4" fill="#cfc800" stroke="#cfc800" stroke-width="0.18" >100/30</text>
<circle cx="177.8" cy="160.8" r="15.6" fill="none" stroke="#b00000" stroke-width="1"/>
<line x1="162.20000000000002" y1="161.5" x2="193.4" y2="161.5" stroke="#e00000" stroke-width="1.2" />
<text x="177.8" y="158.20000000000002" font-size="14" fill="#f2f200" stroke="#f2f200" stroke-width="0.3" text-anchor="middle">D1</text>
<text x="177.8" y="171.4" font-size="10.6" fill="#56b070" stroke="#56b070" stroke-width="0.18" text-anchor="middle">d=12</text>
<text x="195.5" y="158.10000000000002" font-size="15.2" fill="#72e283" stroke="#72e283" stroke-width="0.3" >G=0.47 tf/m²</text>
<text x="195.5" y="173.8" font-size="15.2" fill="#72e283" stroke="#72e283" stroke-width="0.3" >Q=0.2 tf/m²</text>
<circle cx="850" cy="160.8" r="15.6" fill="none" stroke="#b00000" stroke-width="1"/>
<line x1="834.4" y1="161.5" x2="865.6" y2="161.5" stroke="#e00000" stroke-width="1.2" />
<text x="850" y="158.20000000000002" font-size="14" fill="#f2f200" stroke="#f2f200" stroke-width="0.3" text-anchor="middle">D2</text>
<text x="850" y="171.4" font-size="10.6" fill="#56b070" stroke="#56b070" stroke-width="0.18" text-anchor="middle">d=12</text>
<text x="868" y="158.10000000000002" font-size="15.2" fill="#72e283" stroke="#72e283" stroke-width="0.3" >G=0.47 tf/m²</text>
<text x="868" y="173.8" font-size="15.2" fill="#72e283" stroke="#72e283" stroke-width="0.3" >Q=0.2 tf/m²</text>
<circle cx="1021.5" cy="160.8" r="15.6" fill="none" stroke="#b00000" stroke-width="1"/>
<line x1="1005.9" y1="161.5" x2="1037.1" y2="161.5" stroke="#e00000" stroke-width="1.2" />
<text x="1021.5" y="158.20000000000002" font-size="14" fill="#f2f200" stroke="#f2f200" stroke-width="0.3" text-anchor="middle">D3</text>
<text x="1021.5" y="171.4" font-size="10.6" fill="#56b070" stroke="#56b070" stroke-width="0.18" text-anchor="middle">d=12</text>
<text x="1039.5" y="158.10000000000002" font-size="15.2" fill="#72e283" stroke="#72e283" stroke-width="0.3" >G=0.47 tf/m²</text>
<text x="1039.5" y="173.8" font-size="15.2" fill="#72e283" stroke="#72e283" stroke-width="0.3" >Q=0.2 tf/m²</text>
<circle cx="152.5" cy="435.8" r="15.6" fill="none" stroke="#b00000" stroke-width="1"/>
<line x1="136.9" y1="436.5" x2="168.1" y2="436.5" stroke="#e00000" stroke-width="1.2" />
<text x="152.5" y="433.2" font-size="14" fill="#f2f200" stroke="#f2f200" stroke-width="0.3" text-anchor="middle">D5</text>
<text x="152.5" y="446.40000000000003" font-size="10.6" fill="#56b070" stroke="#56b070" stroke-width="0.18" text-anchor="middle">d=12</text>
<text x="171" y="433.1" font-size="15.2" fill="#72e283" stroke="#72e283" stroke-width="0.3" >G=0.47 tf/m²</text>
<text x="171" y="448.8" font-size="15.2" fill="#72e283" stroke="#72e283" stroke-width="0.3" >Q=0.2 tf/m²</text>
<circle cx="385" cy="435.8" r="15.6" fill="none" stroke="#b00000" stroke-width="1"/>
<line x1="369.4" y1="436.5" x2="400.6" y2="436.5" stroke="#e00000" stroke-width="1.2" />
<text x="385" y="433.2" font-size="14" fill="#f2f200" stroke="#f2f200" stroke-width="0.3" text-anchor="middle">D6</text>
<text x="385" y="446.40000000000003" font-size="10.6" fill="#56b070" stroke="#56b070" stroke-width="0.18" text-anchor="middle">d=12</text>
<text x="403.8" y="433.1" font-size="15.2" fill="#72e283" stroke="#72e283" stroke-width="0.3" >G=0.47 tf/m²</text>
<text x="403.8" y="448.8" font-size="15.2" fill="#72e283" stroke="#72e283" stroke-width="0.3" >Q=0.2 tf/m²</text>
<circle cx="150" cy="650" r="15.6" fill="none" stroke="#b00000" stroke-width="1"/>
<line x1="134.4" y1="650.7" x2="165.6" y2="650.7" stroke="#e00000" stroke-width="1.2" />
<text x="150" y="647.4" font-size="14" fill="#f2f200" stroke="#f2f200" stroke-width="0.3" text-anchor="middle">D9</text>
<text x="150" y="660.6" font-size="10.6" fill="#56b070" stroke="#56b070" stroke-width="0.18" text-anchor="middle">d=12</text>
<text x="167.5" y="647.3" font-size="15.2" fill="#72e283" stroke="#72e283" stroke-width="0.3" >G=0.47 tf/m²</text>
<text x="167.5" y="663" font-size="15.2" fill="#72e283" stroke="#72e283" stroke-width="0.3" >Q=0.2 tf/m²</text>
<circle cx="382" cy="650" r="15.6" fill="none" stroke="#b00000" stroke-width="1"/>
<line x1="366.4" y1="650.7" x2="397.6" y2="650.7" stroke="#e00000" stroke-width="1.2" />
<text x="382" y="647.4" font-size="11.5" fill="#f2f200" stroke="#f2f200" stroke-width="0.18" text-anchor="middle">D10</text>
<text x="382" y="660.6" font-size="10.6" fill="#56b070" stroke="#56b070" stroke-width="0.18" text-anchor="middle">d=12</text>
<text x="400.5" y="647.3" font-size="15.2" fill="#72e283" stroke="#72e283" stroke-width="0.3" >G=0.47 tf/m²</text>
<text x="400.5" y="663" font-size="15.2" fill="#72e283" stroke="#72e283" stroke-width="0.3" >Q=0.2 tf/m²</text>
<circle cx="648" cy="650" r="15.6" fill="none" stroke="#b00000" stroke-width="1"/>
<line x1="632.4" y1="650.7" x2="663.6" y2="650.7" stroke="#e00000" stroke-width="1.2" />
<text x="648" y="647.4" font-size="11.5" fill="#f2f200" stroke="#f2f200" stroke-width="0.18" text-anchor="middle">D11</text>
<text x="648" y="660.6" font-size="10.6" fill="#56b070" stroke="#56b070" stroke-width="0.18" text-anchor="middle">d=12</text>
<text x="666" y="647.3" font-size="15.2" fill="#72e283" stroke="#72e283" stroke-width="0.3" >G=0.47 tf/m²</text>
<text x="666" y="663" font-size="15.2" fill="#72e283" stroke="#72e283" stroke-width="0.3" >Q=0.2 tf/m²</text>
<circle cx="1021.8" cy="650" r="15.6" fill="none" stroke="#b00000" stroke-width="1"/>
<line x1="1006.1999999999999" y1="650.7" x2="1037.3999999999999" y2="650.7" stroke="#e00000" stroke-width="1.2" />
<text x="1021.8" y="647.4" font-size="11.5" fill="#f2f200" stroke="#f2f200" stroke-width="0.18" text-anchor="middle">D12</text>
<text x="1021.8" y="660.6" font-size="10.6" fill="#56b070" stroke="#56b070" stroke-width="0.18" text-anchor="middle">d=12</text>
<text x="1039.5" y="647.3" font-size="15.2" fill="#72e283" stroke="#72e283" stroke-width="0.3" >G=0.47 tf/m²</text>
<text x="1039.5" y="663" font-size="15.2" fill="#72e283" stroke="#72e283" stroke-width="0.3" >Q=0.2 tf/m²</text>
<circle cx="107" cy="31" r="10.8" fill="none" stroke="#b00000" stroke-width="1"/>
<text x="107" y="38.6" font-size="21.5" fill="#ffff00" stroke="#ffff00" stroke-width="0.3" text-anchor="middle">A</text>
<circle cx="107" cy="805" r="10.8" fill="none" stroke="#b00000" stroke-width="1"/>
<text x="107" y="812.6" font-size="21.5" fill="#ffff00" stroke="#ffff00" stroke-width="0.3" text-anchor="middle">A</text>
<circle cx="339.7" cy="31" r="10.8" fill="none" stroke="#b00000" stroke-width="1"/>
<text x="339.7" y="38.6" font-size="21.5" fill="#ffff00" stroke="#ffff00" stroke-width="0.3" text-anchor="middle">B</text>
<circle cx="339.7" cy="805" r="10.8" fill="none" stroke="#b00000" stroke-width="1"/>
<text x="339.7" y="812.6" font-size="21.5" fill="#ffff00" stroke="#ffff00" stroke-width="0.3" text-anchor="middle">B</text>
<circle cx="412.6" cy="31" r="10.8" fill="none" stroke="#b00000" stroke-width="1"/>
<text x="412.6" y="38.6" font-size="21.5" fill="#ffff00" stroke="#ffff00" stroke-width="0.3" text-anchor="middle">C</text>
<circle cx="412.6" cy="805" r="10.8" fill="none" stroke="#b00000" stroke-width="1"/>
<text x="412.6" y="812.6" font-size="21.5" fill="#ffff00" stroke="#ffff00" stroke-width="0.3" text-anchor="middle">C</text>
<circle cx="621.2" cy="31" r="10.8" fill="none" stroke="#b00000" stroke-width="1"/>
<text x="621.2" y="38.6" font-size="21.5" fill="#ffff00" stroke="#ffff00" stroke-width="0.3" text-anchor="middle">D</text>
<circle cx="621.2" cy="805" r="10.8" fill="none" stroke="#b00000" stroke-width="1"/>
<text x="621.2" y="812.6" font-size="21.5" fill="#ffff00" stroke="#ffff00" stroke-width="0.3" text-anchor="middle">D</text>
<circle cx="645.8" cy="31" r="10.8" fill="none" stroke="#b00000" stroke-width="1"/>
<text x="645.8" y="38.6" font-size="21.5" fill="#ffff00" stroke="#ffff00" stroke-width="0.3" text-anchor="middle">E</text>
<circle cx="645.8" cy="805" r="10.8" fill="none" stroke="#b00000" stroke-width="1"/>
<text x="645.8" y="812.6" font-size="21.5" fill="#ffff00" stroke="#ffff00" stroke-width="0.3" text-anchor="middle">E</text>
<circle cx="814.8" cy="31" r="10.8" fill="none" stroke="#b00000" stroke-width="1"/>
<text x="814.8" y="38.6" font-size="21.5" fill="#ffff00" stroke="#ffff00" stroke-width="0.3" text-anchor="middle">F</text>
<circle cx="814.8" cy="805" r="10.8" fill="none" stroke="#b00000" stroke-width="1"/>
<text x="814.8" y="812.6" font-size="21.5" fill="#ffff00" stroke="#ffff00" stroke-width="0.3" text-anchor="middle">F</text>
<circle cx="944" cy="31" r="10.8" fill="none" stroke="#b00000" stroke-width="1"/>
<text x="944" y="38.6" font-size="21.5" fill="#ffff00" stroke="#ffff00" stroke-width="0.3" text-anchor="middle">G</text>
<circle cx="944" cy="805" r="10.8" fill="none" stroke="#b00000" stroke-width="1"/>
<text x="944" y="812.6" font-size="21.5" fill="#ffff00" stroke="#ffff00" stroke-width="0.3" text-anchor="middle">G</text>
<circle cx="995.3" cy="31" r="10.8" fill="none" stroke="#b00000" stroke-width="1"/>
<text x="995.3" y="38.6" font-size="21.5" fill="#ffff00" stroke="#ffff00" stroke-width="0.3" text-anchor="middle">H</text>
<circle cx="995.3" cy="805" r="10.8" fill="none" stroke="#b00000" stroke-width="1"/>
<text x="995.3" y="812.6" font-size="21.5" fill="#ffff00" stroke="#ffff00" stroke-width="0.3" text-anchor="middle">H</text>
<circle cx="20.5" cy="118.2" r="10.8" fill="none" stroke="#b00000" stroke-width="1"/>
<text x="20.5" y="125.8" font-size="21.5" fill="#ffff00" stroke="#ffff00" stroke-width="0.3" text-anchor="middle">1</text>
<circle cx="1176.8" cy="118.2" r="10.8" fill="none" stroke="#b00000" stroke-width="1"/>
<text x="1176.8" y="125.8" font-size="21.5" fill="#ffff00" stroke="#ffff00" stroke-width="0.3" text-anchor="middle">1</text>
<circle cx="20.5" cy="283.2" r="10.8" fill="none" stroke="#b00000" stroke-width="1"/>
<text x="20.5" y="290.8" font-size="21.5" fill="#ffff00" stroke="#ffff00" stroke-width="0.3" text-anchor="middle">2</text>
<circle cx="1176.8" cy="283.2" r="10.8" fill="none" stroke="#b00000" stroke-width="1"/>
<text x="1176.8" y="290.8" font-size="21.5" fill="#ffff00" stroke="#ffff00" stroke-width="0.3" text-anchor="middle">2</text>
<circle cx="20.5" cy="390.2" r="10.8" fill="none" stroke="#b00000" stroke-width="1"/>
<text x="20.5" y="397.8" font-size="21.5" fill="#ffff00" stroke="#ffff00" stroke-width="0.3" text-anchor="middle">3</text>
<circle cx="1176.8" cy="390.2" r="10.8" fill="none" stroke="#b00000" stroke-width="1"/>
<text x="1176.8" y="397.8" font-size="21.5" fill="#ffff00" stroke="#ffff00" stroke-width="0.3" text-anchor="middle">3</text>
<circle cx="20.5" cy="623.2" r="10.8" fill="none" stroke="#b00000" stroke-width="1"/>
<text x="20.5" y="630.8000000000001" font-size="21.5" fill="#ffff00" stroke="#ffff00" stroke-width="0.3" text-anchor="middle">4</text>
<circle cx="1176.8" cy="623.2" r="10.8" fill="none" stroke="#b00000" stroke-width="1"/>
<text x="1176.8" y="630.8000000000001" font-size="21.5" fill="#ffff00" stroke="#ffff00" stroke-width="0.3" text-anchor="middle">4</text>
</svg>
<div class="dlgwrap">
<div class="b" style="left:588.5px;top:149px;width:684.6px;height:412.5px;background:#fcfcfc;"></div>
<div class="b" style="left:589.4px;top:149.8px;width:682.9px;height:410.9px;background:#f0f0f0;border-radius:7px;"></div>
<div class="b" style="left:589.8px;top:156px;width:1.2px;height:399px;background:#c9c9c9;"></div>
<div class="b" style="left:589.4px;top:149.8px;width:682.9px;height:25.2px;background:#f3f3f3;border-radius:7px 7px 0 0;"></div>
<div class="b" style="left:589.8px;top:156px;width:1.2px;height:399px;background:#c9c9c9;"></div>
<div class="b" style="left:775.8px;top:175px;width:493.2px;height:356.5px;background:#f9f9f9;"></div>
<span class="t" style="left:596.8px;top:156.73px;font-size:10.6px;color:#2a2a2a;transform:scaleX(0.9182);">Perde Ayarları</span>
<svg class="b" style="left:1254px;top:156px" width="10" height="10" viewBox="0 0 10 10"><path d="M0.5 0.5L9.5 9.5M9.5 0.5L0.5 9.5" stroke="#222" stroke-width="1.1" fill="none"/></svg>
<div class="b" style="left:591px;top:176px;width:182.6px;height:355.6px;background:#fff;border:1px solid #7c8391;box-sizing:border-box;"></div>
<span class="t" style="left:601.0px;top:185.55px;font-size:8.8px;color:#1e1e1e;transform:scaleX(1.0723);-webkit-text-stroke:0.15px currentColor;">Genel Ayarlar</span>
<span class="t" style="left:601.0px;top:208.25px;font-size:8.8px;color:#1e1e1e;transform:scaleX(0.9575);-webkit-text-stroke:0.15px currentColor;">Yazılar</span>
<span class="t" style="left:601.0px;top:230.95px;font-size:8.8px;color:#1e1e1e;transform:scaleX(1.0874);-webkit-text-stroke:0.15px currentColor;">Statik/Betonarme</span>
<span class="t" style="left:601.0px;top:253.65px;font-size:8.8px;color:#1e1e1e;transform:scaleX(1.0503);-webkit-text-stroke:0.15px currentColor;">Sıcaklık Parametreleri</span>
<span class="t" style="left:601.0px;top:276.35px;font-size:8.8px;color:#1e1e1e;transform:scaleX(1.0946);-webkit-text-stroke:0.15px currentColor;">Rijitlik Azaltılması</span>
<span class="t" style="left:601.0px;top:299.05px;font-size:8.8px;color:#1e1e1e;transform:scaleX(1.0822);-webkit-text-stroke:0.15px currentColor;">Performans Analizi</span>
<div class="b" style="left:594px;top:314.6px;width:176.8px;height:21.0px;box-sizing:border-box;border:1px solid #dc9a3c;border-radius:2.5px;background:linear-gradient(#fde4ac 0%,#fad088 25%,#f8c06a 46%,#f5a535 54%,#f7b24a 75%,#fcd994 100%);box-shadow:inset 0 0 0 1px rgba(255,240,200,.55);"></div>
<span class="t" style="left:601.0px;top:321.75px;font-size:8.8px;color:#5b4a3a;transform:scaleX(1.0653);-webkit-text-stroke:0.15px currentColor;">Donatı Tasarımı</span>
<span class="t" style="left:601.0px;top:344.45px;font-size:8.8px;color:#1e1e1e;transform:scaleX(1.0762);-webkit-text-stroke:0.15px currentColor;">Kiriş Ankrajı</span>
<span class="t" style="left:601.0px;top:367.15px;font-size:8.8px;color:#1e1e1e;transform:scaleX(1.0834);-webkit-text-stroke:0.15px currentColor;">Güç. Perd. Kolon Ankrajları</span>
<span class="t" style="left:601.0px;top:389.85px;font-size:8.8px;color:#1e1e1e;transform:scaleX(1.1130);-webkit-text-stroke:0.15px currentColor;">Mantolama Ankrajları</span>
<span class="t" style="left:601.0px;top:412.55px;font-size:8.8px;color:#1e1e1e;transform:scaleX(1.0462);-webkit-text-stroke:0.15px currentColor;">Zımbalama-Döşeme</span>
<span class="t" style="left:601.0px;top:435.25px;font-size:8.8px;color:#1e1e1e;transform:scaleX(1.0452);-webkit-text-stroke:0.15px currentColor;">Zımbalama-Temel</span>
<span class="t" style="left:601.0px;top:457.95px;font-size:8.8px;color:#1e1e1e;transform:scaleX(1.0348);-webkit-text-stroke:0.15px currentColor;">Yapı Bileşenleri</span>
<div class="b" style="left:597.4px;top:538.6px;width:105.0px;height:17.2px;background:#fdfdfd;border:1px solid #d2d2d2;border-radius:4px;box-sizing:border-box;"></div>
<span class="t" style="left:606.0px;top:542.70px;font-size:9.8px;color:#111;transform:scaleX(0.8787);">Sık kullanılanlar…</span>
<svg class="b" style="left:692.6px;top:544.4px" width="4" height="7" viewBox="0 0 4 7"><path d="M0.4 0.4L3.6 3.5L0.4 6.6Z" fill="#444"/></svg>
<div class="b" style="left:1137.4px;top:538.8px;width:61.4px;height:17.1px;background:#fdfdfd;border:1.2px solid #0a5fc2;border-radius:4px;box-sizing:border-box;"></div>
<span class="t" style="left:1152.5px;top:542.90px;font-size:9.8px;color:#111;transform:scaleX(0.9649);">Tamam</span>
<div class="b" style="left:1206px;top:538.8px;width:60.8px;height:17.1px;background:#fdfdfd;border:1px solid #d2d2d2;border-radius:4px;box-sizing:border-box;"></div>
<span class="t" style="left:1226.5px;top:542.90px;font-size:9.8px;color:#111;transform:scaleX(1.0797);">İptal</span>
<div class="b" style="left:787.5px;top:189px;width:476.0px;height:32.6px;border:1px solid #dddddd;box-sizing:border-box;border-radius:1px;"></div>
<div class="b" style="left:787.5px;top:232.6px;width:232.1px;height:116.0px;border:1px solid #dddddd;box-sizing:border-box;border-radius:1px;"></div>
<div class="b" style="left:1031px;top:232.6px;width:231.6px;height:74.0px;border:1px solid #dddddd;box-sizing:border-box;border-radius:1px;"></div>
<div class="b" style="left:788.3px;top:363px;width:231.3px;height:76px;border:1px solid #dddddd;box-sizing:border-box;border-radius:1px;"></div>
<div class="b" style="left:1032.2px;top:363px;width:231.4px;height:76px;border:1px solid #dddddd;box-sizing:border-box;border-radius:1px;"></div>
<div class="b" style="left:792.5px;top:188px;width:106.5px;height:3px;background:#f9f9f9;"></div>
<div class="b" style="left:792.5px;top:231.6px;width:63.5px;height:3.0px;background:#f9f9f9;"></div>
<div class="b" style="left:1035px;top:231.6px;width:117px;height:3.0px;background:#f9f9f9;"></div>
<div class="b" style="left:793px;top:362px;width:152px;height:3px;background:#f9f9f9;"></div>
<div class="b" style="left:1037.5px;top:362px;width:153.5px;height:3px;background:#f9f9f9;"></div>
<div class="b" style="left:794.8px;top:183.7px;width:10.6px;height:10.6px;background:#fbfbfb;border:1px solid #858585;border-radius:2.6px;box-sizing:border-box;"></div>
<span class="t" style="left:808.0px;top:184.30px;font-size:9.8px;color:#0c0c0c;transform:scaleX(0.8975);">Güçlendirme perdesi:</span>
<div class="b" style="left:797.5px;top:204px;width:10.6px;height:10.6px;background:#fbfbfb;border:1px solid #c9c9c9;border-radius:2.6px;box-sizing:border-box;"></div>
<span class="t" style="left:810.4px;top:204.70px;font-size:9.8px;color:#8c8c8c;transform:scaleX(0.8875);">Sol kolonu başlık olarak kullan</span>
<div class="b" style="left:1041px;top:204px;width:10.6px;height:10.6px;background:#fbfbfb;border:1px solid #c9c9c9;border-radius:2.6px;box-sizing:border-box;"></div>
<span class="t" style="left:1053.6px;top:204.70px;font-size:9.8px;color:#8c8c8c;transform:scaleX(0.8882);">Sağ kolonu başlık olarak kullan</span>
<span class="t" style="left:794.4px;top:227.70px;font-size:9.8px;color:#0c0c0c;transform:scaleX(0.8739);">Başlık bölgesi :</span>
<div class="b" style="left:797.5px;top:247.8px;width:10.6px;height:10.6px;background:#0f5ebf;border-radius:2.6px;"></div>
<svg class="b" style="left:797.5px;top:247.8px" width="10.6" height="10.6" viewBox="0 0 10.6 10.6"><path d="M2.6 5.5L4.6 7.4L8.2 3.4" stroke="#fff" stroke-width="1" fill="none" stroke-linecap="round" stroke-linejoin="round"/></svg>
<span class="t" style="left:810.4px;top:248.10px;font-size:9.8px;color:#0c0c0c;transform:scaleX(0.8768);">Kısa başlık perdesi</span>
<div class="b" style="left:788.4px;top:260px;width:114.3px;height:3.8px;background:#fb0505;"></div>
<span class="t" style="left:797.0px;top:268.70px;font-size:9.8px;color:#0c0c0c;transform:scaleX(0.9033);">Başlık donatısı / toplam donatı :</span>
<div class="b" style="left:960px;top:263.4px;width:50.2px;height:18.6px;background:#fbfbfb;border:1px solid #e7e7e7;border-radius:2px;box-sizing:border-box;"></div>
<span class="t" style="left:964.6px;top:267.41px;font-size:9.2px;color:#8f8f8f;transform:scaleX(1.0000);letter-spacing:0.3px;">0.75</span>
<div class="b" style="left:797.1px;top:288.9px;width:11.0px;height:11.0px;background:#fff;border:3.2px solid #c2c2c2;border-radius:50%;box-sizing:border-box;"></div>
<span class="t" style="left:810.4px;top:289.30px;font-size:9.8px;color:#8c8c8c;transform:scaleX(0.8968);">Başlık bölgesi uzunluğunu otomatik hesapla</span>
<div class="b" style="left:797.1px;top:308.7px;width:11.0px;height:11.0px;background:#fbfbfb;border:1px solid #c2c2c2;border-radius:50%;box-sizing:border-box;"></div>
<span class="t" style="left:810.4px;top:309.10px;font-size:9.8px;color:#8c8c8c;transform:scaleX(0.8698);">Kullanıcı tanımlı başlık uzunlukları :</span>
<span class="t" style="left:797.0px;top:329.70px;font-size:9.8px;color:#0c0c0c;transform:scaleX(0.9434);">Sol :</span>
<div class="b" style="left:836.4px;top:325.4px;width:50.0px;height:16.8px;background:#fbfbfb;border:1px solid #e7e7e7;border-radius:2px;box-sizing:border-box;"></div>
<span class="t" style="left:841.4px;top:328.10px;font-size:9.8px;color:#8f8f8f;transform:scaleX(0.8618);">50 cm</span>
<span class="t" style="left:918.4px;top:329.70px;font-size:9.8px;color:#0c0c0c;transform:scaleX(0.9002);">Sağ :</span>
<div class="b" style="left:960px;top:325.4px;width:50.2px;height:16.8px;background:#fbfbfb;border:1px solid #e7e7e7;border-radius:2px;box-sizing:border-box;"></div>
<span class="t" style="left:965.0px;top:328.10px;font-size:9.8px;color:#8f8f8f;transform:scaleX(0.8618);">50 cm</span>
<span class="t" style="left:1037.6px;top:227.70px;font-size:9.8px;color:#0c0c0c;transform:scaleX(0.9081);">Donatı tasarım seçenekleri :</span>
<div class="b" style="left:1040.5px;top:247.5px;width:11.0px;height:11.0px;background:#fbfbfb;border:1px solid #858585;border-radius:50%;box-sizing:border-box;"></div>
<span class="t" style="left:1054.0px;top:248.10px;font-size:9.8px;color:#0c0c0c;transform:scaleX(0.8878);">Taşıyıcı sistem perdesi</span>
<div class="b" style="left:1040.5px;top:268.5px;width:11.0px;height:11.0px;background:#fbfbfb;border:1px solid #858585;border-radius:50%;box-sizing:border-box;"></div>
<span class="t" style="left:1054.0px;top:269.30px;font-size:9.8px;color:#0c0c0c;transform:scaleX(0.9134);">Bodrum kat çevre perdesi</span>
<div class="b" style="left:1040.5px;top:288.9px;width:11.0px;height:11.0px;background:#fff;border:3.2px solid #0f5ebf;border-radius:50%;box-sizing:border-box;"></div>
<span class="t" style="left:1054.0px;top:289.30px;font-size:9.8px;color:#0c0c0c;transform:scaleX(0.9277);">Geometriye göre otomatik karar ver</span>
<div class="b" style="left:1041px;top:315px;width:10.6px;height:10.6px;background:#fbfbfb;border:1px solid #858585;border-radius:2.6px;box-sizing:border-box;"></div>
<span class="t" style="left:1054.0px;top:315.30px;font-size:9.8px;color:#0c0c0c;transform:scaleX(0.9014);">Aplikasyonda daima dışarıda detaylandır</span>
<div class="b" style="left:796px;top:358px;width:10.6px;height:10.6px;background:#fbfbfb;border:1px solid #858585;border-radius:2.6px;box-sizing:border-box;"></div>
<span class="t" style="left:809.0px;top:358.30px;font-size:9.8px;color:#0c0c0c;transform:scaleX(0.8699);">Kullanıcı tanımlı birleşim - Sol uç :</span>
<div class="b" style="left:797.1px;top:378.1px;width:11.0px;height:11.0px;background:#fff;border:3.2px solid #c2c2c2;border-radius:50%;box-sizing:border-box;"></div>
<span class="t" style="left:810.4px;top:378.70px;font-size:9.8px;color:#8c8c8c;transform:scaleX(0.8906);">Birincil Perde - Donatıları kesiştir</span>
<div class="b" style="left:797.1px;top:397.9px;width:11.0px;height:11.0px;background:#fbfbfb;border:1px solid #c2c2c2;border-radius:50%;box-sizing:border-box;"></div>
<span class="t" style="left:810.4px;top:398.70px;font-size:9.8px;color:#8c8c8c;transform:scaleX(0.8977);">Birincil Perde - Donatıları kenetle</span>
<div class="b" style="left:797.1px;top:418.3px;width:11.0px;height:11.0px;background:#fbfbfb;border:1px solid #c2c2c2;border-radius:50%;box-sizing:border-box;"></div>
<span class="t" style="left:810.4px;top:418.70px;font-size:9.8px;color:#8c8c8c;transform:scaleX(0.9264);">Perdeye bağla :</span>
<div class="b" style="left:924px;top:415.6px;width:86.6px;height:16.2px;background:#fbfbfb;border:1px solid #e7e7e7;border-radius:2px;box-sizing:border-box;"></div>
<span class="t" style="left:794.4px;top:451.10px;font-size:9.8px;color:#0c0c0c;transform:scaleX(0.9386);">Sol perdeye ankraj yap :</span>
<div class="b" style="left:924px;top:448px;width:86.6px;height:16.2px;background:#fff;border:1px solid #e2e2e2;border-bottom:1px solid #868686;border-radius:2px;box-sizing:border-box;"></div>
<div class="b" style="left:1040.6px;top:358px;width:10.6px;height:10.6px;background:#fbfbfb;border:1px solid #858585;border-radius:2.6px;box-sizing:border-box;"></div>
<span class="t" style="left:1053.0px;top:358.30px;font-size:9.8px;color:#0c0c0c;transform:scaleX(0.8723);">Kullanıcı tanımlı birleşim - Sağ uç :</span>
<div class="b" style="left:1040.5px;top:378.3px;width:11.0px;height:11.0px;background:#fff;border:3.2px solid #c2c2c2;border-radius:50%;box-sizing:border-box;"></div>
<span class="t" style="left:1053.6px;top:378.70px;font-size:9.8px;color:#8c8c8c;transform:scaleX(0.8906);">Birincil Perde - Donatıları kesiştir</span>
<div class="b" style="left:1040.5px;top:398.1px;width:11.0px;height:11.0px;background:#fbfbfb;border:1px solid #c2c2c2;border-radius:50%;box-sizing:border-box;"></div>
<span class="t" style="left:1053.6px;top:398.70px;font-size:9.8px;color:#8c8c8c;transform:scaleX(0.8977);">Birincil Perde - Donatıları kenetle</span>
<div class="b" style="left:1040.5px;top:418.3px;width:11.0px;height:11.0px;background:#fbfbfb;border:1px solid #c2c2c2;border-radius:50%;box-sizing:border-box;"></div>
<span class="t" style="left:1053.6px;top:418.70px;font-size:9.8px;color:#8c8c8c;transform:scaleX(0.9264);">Perdeye bağla :</span>
<div class="b" style="left:1166.7px;top:415.6px;width:87.0px;height:16.2px;background:#fbfbfb;border:1px solid #e7e7e7;border-radius:2px;box-sizing:border-box;"></div>
<span class="t" style="left:1040.6px;top:451.00px;font-size:9.8px;color:#0c0c0c;transform:scaleX(0.9361);">Sağ perdeye ankraj yap :</span>
<div class="b" style="left:1166.7px;top:448px;width:87.0px;height:16.2px;background:#fff;border:1px solid #e2e2e2;border-bottom:1px solid #868686;border-radius:2px;box-sizing:border-box;"></div>
<div class="b" style="left:1041px;top:474.7px;width:10.6px;height:10.6px;background:#0f5ebf;border-radius:2.6px;"></div>
<svg class="b" style="left:1041px;top:474.7px" width="10.6" height="10.6" viewBox="0 0 10.6 10.6"><path d="M2.6 5.5L4.6 7.4L8.2 3.4" stroke="#fff" stroke-width="1" fill="none" stroke-linecap="round" stroke-linejoin="round"/></svg>
<span class="t" style="left:1053.7px;top:475.20px;font-size:9.8px;color:#0c0c0c;transform:scaleX(0.9249);">Sağ uçta perdeyi sürekli kabul et</span>
</div>
</body>
</html>
